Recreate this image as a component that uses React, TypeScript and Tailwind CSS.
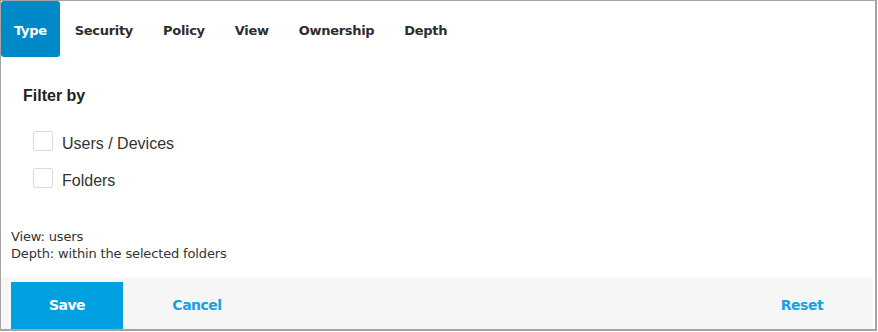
import { useState } from 'react';

const TABS = ['Type', 'Security', 'Policy', 'View', 'Ownership', 'Depth'];

const FILTERS = ['Users / Devices', 'Folders'];

function Checkbox({ label }: { label: string }) {
  const [checked, setChecked] = useState(false);
  return (
    <label className="flex items-start gap-[9px] cursor-pointer">
      <input
        type="checkbox"
        checked={checked}
        onChange={() => setChecked(!checked)}
        className="appearance-none w-[20px] h-[20px] rounded-[2px] border border-[#dcdcdc] bg-white checked:bg-[#00a0e1]"
      />
      <span className="mt-[3px] text-[16px] leading-[20px] text-[#333] font-['Liberation_Sans',Arial,sans-serif]">
        {label}
      </span>
    </label>
  );
}

export default function App() {
  const [active, setActive] = useState('Type');

  return (
    <div className="w-[877px] h-[331px] bg-white border-t border-l border-r-2 border-b-2 border-[#a4a4a4] flex flex-col">
      <div className="h-[56px] flex font-['DejaVu_Sans',Verdana,sans-serif] text-[13px] font-bold tracking-[-0.3px]">
        {TABS.map((tab) => (
          <button
            key={tab}
            type="button"
            onClick={() => setActive(tab)}
            className={
              tab === active
                ? 'px-[13px] pt-[3px] rounded-[3px] bg-[#0089c7] text-white'
                : 'px-[15px] pt-[3px] text-[#2d2d2d]'
            }
          >
            {tab}
          </button>
        ))}
      </div>

      <div className="flex-1 flex flex-col">
        <div className="pl-[22px] pt-[30px]">
          <h3 className="text-[16px] leading-[18px] font-bold text-[#222] font-['Liberation_Sans',Arial,sans-serif]">
            Filter by
          </h3>
          <div className="pl-[10px] pt-[26px] flex flex-col gap-[14px]">
            {FILTERS.map((f) => (
              <Checkbox key={f} label={f} />
            ))}
          </div>
        </div>

        <div className="mt-auto pl-[10px] pb-[15px] text-[13px] leading-[17px] text-[#333] font-['DejaVu_Sans',Verdana,sans-serif] tracking-[-0.15px]">
          <p>View: users</p>
          <p>Depth: within the selected folders</p>
        </div>
      </div>

      <div className="h-[52px] mr-[2px] bg-[#f6f6f6] pl-[10px] pr-[15px] pt-[5px] flex font-['DejaVu_Sans',Verdana,sans-serif] text-[14px] font-bold tracking-[-0.5px]">
        <button type="button" className="w-[112px] bg-[#00a0e1] text-white">
          Save
        </button>
        <button type="button" className="w-[112px] ml-[18px] text-[#19a0e0]">
          Cancel
        </button>
        <button type="button" className="w-[112px] ml-auto text-[#19a0e0]">
          Reset
        </button>
      </div>
    </div>
  );
}
